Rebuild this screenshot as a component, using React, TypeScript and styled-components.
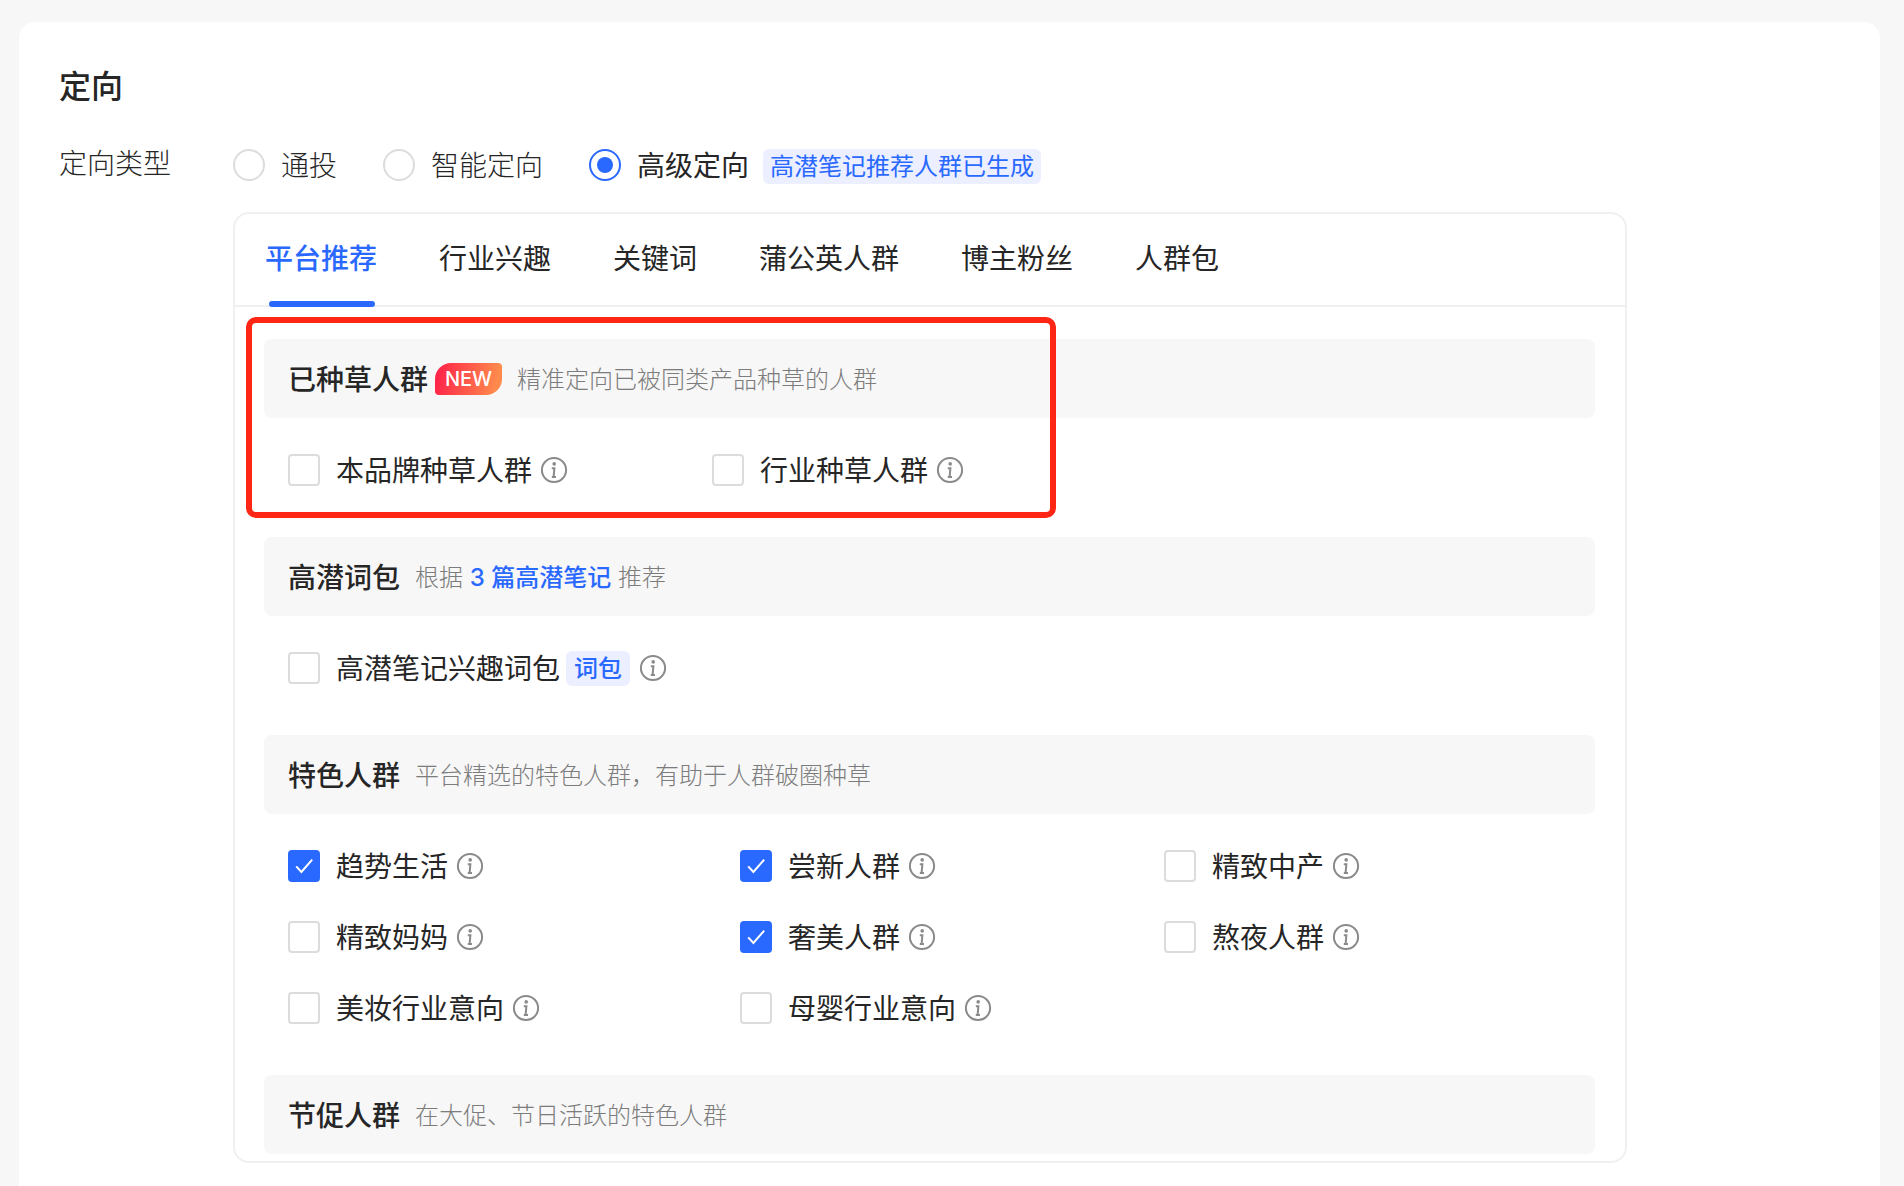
import React, { useState } from "react";
import styled, { createGlobalStyle } from "styled-components";

const blue = "#2a69ff";
const ink = "#262626";
const line = "#f0f0f0";

const GlobalStyle = createGlobalStyle`
  * { box-sizing: border-box; }
  body {
    margin: 0;
    background: #f7f7f7;
    color: ${ink};
    font-family: Inter, "Noto Sans CJK SC", sans-serif;
    font-size: 28px;
    line-height: 36px;
  }
  button, input { font: inherit; color: inherit; margin: 0; }
`;

const Page = styled.div`
  display: flex;
  flex-direction: column;
  min-height: 100vh;
  padding: 22px 24px 0 19px;
`;

const Card = styled.main`
  flex: 1;
  padding: 45px 40px 23px;
  border-radius: 16px 16px 0 0;
  background: #fff;
`;

const Title = styled.h1`
  margin: 0 0 40px;
  font-size: 32px;
  line-height: 40px;
  font-weight: 500;
`;

const Field = styled.div`
  display: grid;
  grid-template-columns: 174px minmax(0, 1394px);
`;

const FieldLabel = styled.span`
  line-height: 34px;
  font-weight: 300;
`;

const RadioGroup = styled.div`
  display: flex;
  align-items: center;
  gap: 46px;
  height: 36px;
  margin-bottom: 29px;
`;

const RadioLabel = styled.label<{ $on: boolean }>`
  display: flex;
  align-items: center;
  gap: 16px;
  font-weight: ${(p) => (p.$on ? 400 : 300)};
`;

const RadioText = styled.span`
  display: flex;
  align-items: center;
  gap: 14px;
  padding-top: 2px;
`;

const Radio = styled.input`
  appearance: none;
  display: grid;
  place-items: center;
  width: 32px;
  height: 32px;
  border: 2px solid #dcdcdc;
  border-radius: 50%;
  &:checked { border-color: ${blue}; }
  &:checked::after {
    content: "";
    width: 16px;
    height: 16px;
    border-radius: 50%;
    background: ${blue};
  }
`;

const Tag = styled.span<{ $strong?: boolean }>`
  padding: 0 ${(p) => (p.$strong ? 8 : 7)}px;
  border-radius: 6px;
  background: #ebefff;
  color: ${blue};
  font-size: 24px;
  line-height: 35px;
  font-weight: ${(p) => (p.$strong ? 500 : 400)};
`;

const Panel = styled.section`
  border: 2px solid ${line};
  border-radius: 16px;
`;

const Tabs = styled.div`
  display: flex;
  gap: 62px;
  padding: 0 30px;
  border-bottom: 2px solid ${line};
`;

const Tab = styled.button<{ $on: boolean }>`
  position: relative;
  height: 91px;
  padding: 0 0 2px;
  border: 0;
  background: none;
  white-space: nowrap;
  color: ${(p) => (p.$on ? blue : ink)};
  font-weight: ${(p) => (p.$on ? 500 : 400)};
  &::after {
    content: "";
    display: ${(p) => (p.$on ? "block" : "none")};
    position: absolute;
    left: 4px;
    right: 2px;
    bottom: -2px;
    height: 6px;
    border-radius: 3px;
    background: ${blue};
  }
`;

const Groups = styled.div`
  display: flex;
  flex-direction: column;
  gap: 51px;
  padding: 32px 30px 7px 29px;
`;

const Group = styled.section`
  position: relative;
`;

const Highlight = styled.div`
  position: absolute;
  left: -18px;
  top: -22px;
  width: 810px;
  height: 201px;
  border: 6px solid #ff2616;
  border-radius: 10px;
  pointer-events: none;
`;

const GroupHead = styled.header`
  display: flex;
  align-items: center;
  height: 79px;
  padding: 0 24px;
  border-radius: 8px;
  background: #f7f7f7;
`;

const GroupTitle = styled.h2`
  margin: 0;
  padding-top: 2px;
  font-size: 28px;
  line-height: 36px;
  font-weight: 500;
`;

const NewBadge = styled.span`
  margin-left: 7px;
  width: 67px;
  border-radius: 16px 4px 16px 4px;
  background: linear-gradient(100deg, #ff2449 5%, #ff8a4c 90%);
  color: #fff;
  font-size: 20px;
  line-height: 32px;
  font-weight: 500;
  text-align: center;
`;

const GroupNote = styled.p`
  margin: 0 0 0 15px;
  padding-top: 2px;
  color: #7c7c7c;
  font-size: 24px;
  line-height: 36px;
  font-weight: 300;
`;

const NoteLink = styled.a`
  color: ${blue};
  font-weight: 500;
  text-decoration: none;
`;

const Options = styled.div<{ $columns: string }>`
  display: grid;
  grid-template-columns: ${(p) => p.$columns};
  grid-auto-rows: 32px;
  row-gap: 39px;
  padding: 36px 24px 0;
`;

const Option = styled.div`
  display: flex;
  align-items: center;
`;

const OptionLabel = styled.label<{ $tagged: boolean }>`
  display: flex;
  align-items: center;
  gap: 16px;
  margin-right: ${(p) => (p.$tagged ? 6 : 8)}px;
`;

const OptionText = styled.span`
  padding-top: 2px;
`;

const CheckWrap = styled.span`
  display: grid;
  width: 32px;
  height: 32px;
  & > * { grid-area: 1 / 1; }
  svg { pointer-events: none; }
`;

const Check = styled.input`
  appearance: none;
  width: 32px;
  height: 32px;
  border: 2px solid #dcdcdc;
  border-radius: 4px;
  background: #fff;
  &:checked { border-color: ${blue}; background: ${blue}; }
`;

const InfoButton = styled.button`
  display: flex;
  padding: 0;
  border: 0;
  background: none;
  color: #8a8a8a;
  ${Tag} + & { margin-left: 9px; }
`;

function InfoIcon() {
  return (
    <svg width="28" height="28" viewBox="0 0 28 28" fill="none" stroke="currentColor">
      <circle cx="14" cy="14" r="12.1" strokeWidth="2" />
      <circle cx="14.2" cy="7.9" r="1.8" fill="currentColor" stroke="none" />
      <path d="M11.8 12.2H14.4L13.6 20.8M11.8 21H16" strokeWidth="2" />
    </svg>
  );
}

type Item = { name: string; tag?: string; checked?: boolean };

function OptionItem({ name, tag, checked = false }: Item) {
  const [on, setOn] = useState(checked);
  return (
    <Option>
      <OptionLabel $tagged={Boolean(tag)}>
        <CheckWrap>
          <Check type="checkbox" checked={on} onChange={() => setOn(!on)} />
          {on && (
            <svg width="32" height="32" viewBox="0 0 32 32" fill="none" stroke="#fff" strokeWidth="2">
              <path d="M8.2 16.4L13.4 22L24.2 9.6" />
            </svg>
          )}
        </CheckWrap>
        <OptionText>{name}</OptionText>
      </OptionLabel>
      {tag && <Tag $strong>{tag}</Tag>}
      <InfoButton type="button" aria-label={name}>
        <InfoIcon />
      </InfoButton>
    </Option>
  );
}

type GroupData = {
  title: string;
  isNew?: boolean;
  note: React.ReactNode;
  columns: string;
  items: Item[];
};

const groups: GroupData[] = [
  {
    title: "已种草人群",
    isNew: true,
    note: "精准定向已被同类产品种草的人群",
    columns: "424px 1fr",
    items: [{ name: "本品牌种草人群" }, { name: "行业种草人群" }],
  },
  {
    title: "高潜词包",
    note: (
      <>
        根据 <NoteLink href="#notes">3 篇高潜笔记</NoteLink> 推荐
      </>
    ),
    columns: "1fr",
    items: [{ name: "高潜笔记兴趣词包", tag: "词包" }],
  },
  {
    title: "特色人群",
    note: "平台精选的特色人群，有助于人群破圈种草",
    columns: "452px 424px 1fr",
    items: [
      { name: "趋势生活", checked: true },
      { name: "尝新人群", checked: true },
      { name: "精致中产" },
      { name: "精致妈妈" },
      { name: "奢美人群", checked: true },
      { name: "熬夜人群" },
      { name: "美妆行业意向" },
      { name: "母婴行业意向" },
    ],
  },
  { title: "节促人群", note: "在大促、节日活跃的特色人群", columns: "1fr", items: [] },
];

const modes = ["通投", "智能定向", "高级定向"];
const tabs = ["平台推荐", "行业兴趣", "关键词", "蒲公英人群", "博主粉丝", "人群包"];

export default function App() {
  const [mode, setMode] = useState("高级定向");
  const [tab, setTab] = useState("平台推荐");
  return (
    <>
      <GlobalStyle />
      <Page>
        <Card>
          <Title>定向</Title>
          <Field>
            <FieldLabel id="mode-label">定向类型</FieldLabel>
            <div>
              <RadioGroup role="radiogroup" aria-labelledby="mode-label">
                {modes.map((m) => (
                  <RadioLabel key={m} $on={m === mode}>
                    <Radio type="radio" name="mode" checked={m === mode} onChange={() => setMode(m)} />
                    <RadioText>
                      {m}
                      {m === "高级定向" && <Tag>高潜笔记推荐人群已生成</Tag>}
                    </RadioText>
                  </RadioLabel>
                ))}
              </RadioGroup>
              <Panel>
                <Tabs role="tablist">
                  {tabs.map((t) => (
                    <Tab
                      key={t}
                      type="button"
                      role="tab"
                      aria-selected={t === tab}
                      $on={t === tab}
                      onClick={() => setTab(t)}
                    >
                      {t}
                    </Tab>
                  ))}
                </Tabs>
                <Groups>
                  {groups.map((g) => (
                    <Group key={g.title}>
                      <GroupHead>
                        <GroupTitle>{g.title}</GroupTitle>
                        {g.isNew && <NewBadge>NEW</NewBadge>}
                        <GroupNote>{g.note}</GroupNote>
                      </GroupHead>
                      {g.items.length > 0 && (
                        <Options $columns={g.columns}>
                          {g.items.map((i) => (
                            <OptionItem key={i.name} {...i} />
                          ))}
                        </Options>
                      )}
                      {g.isNew && <Highlight />}
                    </Group>
                  ))}
                </Groups>
              </Panel>
            </div>
          </Field>
        </Card>
      </Page>
    </>
  );
}
